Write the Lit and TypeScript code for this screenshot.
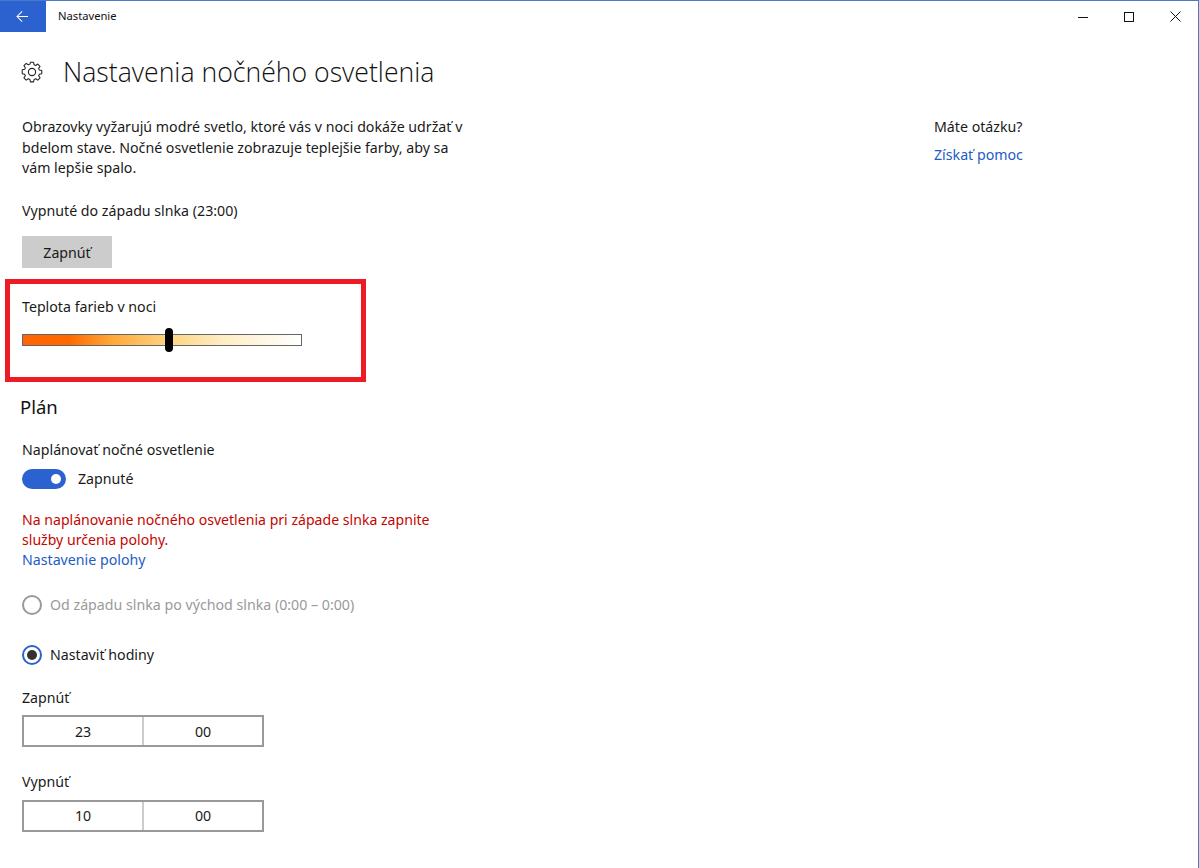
import { LitElement, html, css } from "lit";
import { customElement } from "lit/decorators.js";

@customElement("app-root")
export class AppRoot extends LitElement {
  static styles = css`
    :host { display: block; width: 1199px; height: 868px; overflow: hidden; background: #fff; box-sizing: border-box;
      border-top: 1px solid #4a79c9; border-right: 1px solid #4a79c9;
      font-family: "Noto Sans", "Open Sans", sans-serif; font-size: 14.2px; color: #1a1a1a; }
    .titlebar { display: flex; align-items: center; height: 31px; }
    .back { width: 46px; height: 31px; background: #2b62cf; display: flex; align-items: center; justify-content: center; }
    .back svg { margin-right: 2px; }
    .apptitle { font-size: 11.2px; margin-left: 12px; padding-bottom: 2px; color: #111; }
    .winbtns { margin-left: auto; display: flex; }
    .winbtn { width: 46px; height: 31px; display: flex; align-items: center; justify-content: center; }
    .head { display: flex; align-items: center; height: 40px; margin-top: 20px; padding-left: 21px; }
    .head svg { display: block; }
    h1 { margin: 0 0 0 20px; font-size: 26.65px; font-weight: 300; font-family: "Open Sans", sans-serif; color: #111; white-space: nowrap; }
    .cols { display: flex; margin-top: 25px; }
    .left { width: 934px; padding-left: 22px; box-sizing: border-box; }
    p { margin: 0; line-height: 20.5px; white-space: nowrap; }
    .status { margin-top: 22px; }
    .btn { margin-top: 15px; width: 90px; height: 32px; background: #ccc; display: flex; align-items: center; justify-content: center; }
    .redbox { margin: 11px 0 0 -17px; width: 361px; height: 103px; box-sizing: border-box; border: 5px solid #ed1c24; padding: 13px 0 0 12px; }
    .redbox p { line-height: 20px; }
    .track { position: relative; margin-top: 17px; width: 280px; height: 12px; box-sizing: border-box; border: 1px solid #666;
      background: linear-gradient(to right, #ff6400 0, #ff6a00 17%, #ffa83a 32%, #ffd47f 52%, #ffedc5 72%, #ffffff 100%); }
    .thumb { position: absolute; left: 142px; top: -7px; width: 8px; height: 24px; border-radius: 4px; background: #000; }
    h2 { margin: 13px 0 0 -2px; font-size: 18.5px; font-weight: 400; line-height: 24px; color: #111; }
    .sched { margin-top: 21px; }
    .toggle-row { display: flex; align-items: center; margin-top: 7px; height: 22px; }
    .toggle { width: 44px; height: 20px; border-radius: 10px; background: #2b62cf; display: flex; align-items: center; justify-content: flex-end; padding-right: 5px; box-sizing: border-box; }
    .knob { width: 10px; height: 10px; border-radius: 50%; background: #fff; }
    .toggle-row span { margin-left: 12px; }
    .err { margin-top: 20px; color: #c50500; line-height: 20px; font-size: 14.1px; }
    .link { color: #1e5bc6; line-height: 20px; }
    .radio { display: flex; align-items: center; height: 22px; }
    .radio span { margin-left: 8px; }
    .r1 { margin-top: 24px; color: #9a9a9a; }
    .r2 { margin-top: 28px; }
    .circ { width: 20px; height: 20px; border-radius: 50%; box-sizing: border-box; border: 2px solid #999; display: flex; align-items: center; justify-content: center; }
    .circ.on { border-color: #2b62cf; }
    .dot { width: 10px; height: 10px; border-radius: 50%; background: #333; }
    .lab { margin-top: 22px; }
    .lab2 { margin-top: 25px; }
    .time { display: flex; margin-top: 7px; width: 242px; height: 32px; box-sizing: border-box; border: 2px solid #999; }
    .time div { flex: 1; display: flex; align-items: center; justify-content: center; }
    .time div + div { border-left: 2px solid #ccc; }
    .help { margin-top: 7px; }
  `;

  render() {
    return html`
      <div class="titlebar">
        <div class="back">
          <svg width="13" height="13" viewBox="0 0 14 14" fill="none" stroke="#fff" stroke-width="1.1"><path d="M13 7H1.2M6.6 1.5 1.1 7l5.5 5.500"/></svg>
        </div>
        <div class="apptitle">Nastavenie</div>
        <div class="winbtns">
          <div class="winbtn"><svg width="10" height="10" viewBox="0 0 10 10" stroke="#111" fill="none"><path d="M0 5.5h10"/></svg></div>
          <div class="winbtn"><svg width="10" height="10" viewBox="0 0 10 10" stroke="#111" fill="none"><rect x=".5" y=".5" width="9" height="9"/></svg></div>
          <div class="winbtn"><svg width="11" height="11" viewBox="0 0 11 11" stroke="#111" fill="none"><path d="M.5.5l10 10M10.500.5l-10 10"/></svg></div>
        </div>
      </div>
      <div class="head">
        <svg width="22" height="22" viewBox="0 0 22 22" fill="none" stroke="#222" stroke-width="1.1" stroke-linejoin="round">
          <circle cx="11" cy="11" r="3.6"/>
          <path d="M9.300 1.800h3.400l.5 2.600 1.700.7 2.200-1.500 2.400 2.400-1.500 2.200.7 1.700 2.600.5v3.400l-2.600.5-.7 1.700 1.500 2.200-2.400 2.400-2.200-1.500-1.700.7-.5 2.600H9.300l-.5-2.600-1.700-.7-2.200 1.500-2.400-2.400 1.500-2.200-.7-1.700-2.600-.5V9.700l2.600-.5.7-1.700-1.500-2.200 2.400-2.400 2.200 1.500 1.700-.7z" transform="translate(11 11) scale(.95) translate(-11 -12)"/>
        </svg>
        <h1>Nastavenia nočného osvetlenia</h1>
      </div>
      <div class="cols">
        <div class="left">
          <p>Obrazovky vyžarujú modré svetlo, ktoré vás v noci dokáže udržať v<br>bdelom stave. Nočné osvetlenie zobrazuje teplejšie farby, aby sa<br>vám lepšie spalo.</p>
          <p class="status">Vypnuté do západu slnka (23:00)</p>
          <div class="btn">Zapnúť</div>
          <div class="redbox">
            <p>Teplota farieb v noci</p>
            <div class="track"><div class="thumb"></div></div>
          </div>
          <h2>Plán</h2>
          <p class="sched">Naplánovať nočné osvetlenie</p>
          <div class="toggle-row"><div class="toggle"><div class="knob"></div></div><span>Zapnuté</span></div>
          <p class="err">Na naplánovanie nočného osvetlenia pri západe slnka zapnite<br>služby určenia polohy.</p>
          <p class="link">Nastavenie polohy</p>
          <div class="radio r1"><div class="circ"></div><span>Od západu slnka po východ slnka (0:00 – 0:00)</span></div>
          <div class="radio r2"><div class="circ on"><div class="dot"></div></div><span>Nastaviť hodiny</span></div>
          <p class="lab">Zapnúť</p>
          <div class="time"><div>23</div><div>00</div></div>
          <p class="lab2">Vypnúť</p>
          <div class="time"><div>10</div><div>00</div></div>
        </div>
        <div>
          <p>Máte otázku?</p>
          <p class="link help">Získať pomoc</p>
        </div>
      </div>
    `;
  }
}
